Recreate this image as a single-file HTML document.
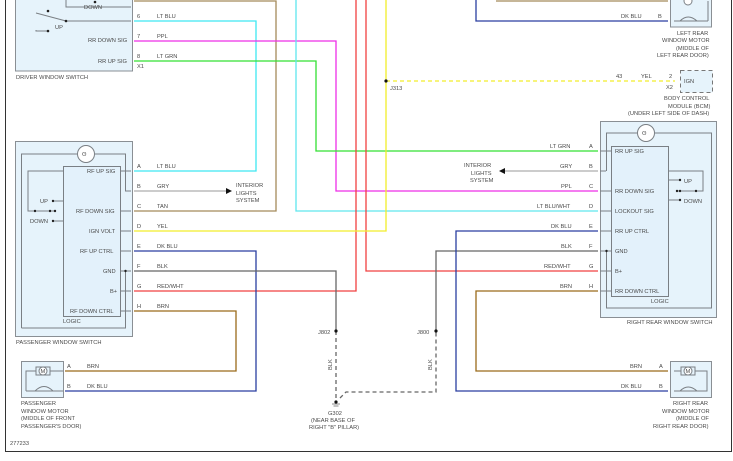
<!DOCTYPE html>
<html><head><meta charset="utf-8"><style>
html,body{margin:0;padding:0;background:#fff;}
svg{display:block;}
text{font-family:"Liberation Sans",sans-serif;font-size:5.7px;fill:#4a4a4a;}
.bx{fill:#e6f3fb;stroke:#8a8f94;stroke-width:1;}
.g{fill:none;stroke:#7a7f84;stroke-width:1;}
.w{fill:none;stroke-width:1.3;}
</style></head><body>
<svg width="733" height="461" viewBox="0 0 733 461" xmlns="http://www.w3.org/2000/svg">
<rect width="733" height="461" fill="#fff"/>
<path d="M5.5 0 V451.5 H731.5 V0" fill="none" stroke="#333" stroke-width="1"/>

<rect class="bx" x="15.5" y="-2" width="117" height="73"/>
<path class="g" d="M66 0 V7 H131 M36 13 L66 21 H131 M36 30 V31 H48"/>
<circle cx="95" cy="2" r="1.3" fill="#222"/><circle cx="48" cy="11" r="1.3" fill="#222"/><circle cx="66" cy="21" r="1.3" fill="#222"/><circle cx="48" cy="31" r="1.3" fill="#222"/>
<text x="84" y="9">DOWN</text><text x="55" y="29">UP</text>
<text x="88" y="42">RR DOWN SIG</text><text x="98" y="63">RR UP SIG</text>
<text x="16" y="79">DRIVER WINDOW SWITCH</text>
<text x="137" y="18">6</text><text x="157" y="18">LT BLU</text>
<text x="137" y="38">7</text><text x="157" y="38">PPL</text>
<text x="137" y="58">8</text><text x="157" y="58">LT GRN</text>
<text x="137" y="68">X1</text>

<path class="w" stroke="#a58a5a" d="M134 1 H276 V211 H134"/>
<path class="w" stroke="#3ee8f2" d="M134 21 H256 V171 H134"/>
<path class="w" stroke="#ee2ee8" d="M134 41 H336 V191 H598"/>
<path class="w" stroke="#33e033" d="M134 61 H316 V151 H598"/>
<path class="w" stroke="#5fe6ee" d="M296 0 V211 H598"/>
<path class="w" stroke="#f04040" d="M356 0 V291 H134"/>
<path class="w" stroke="#f04040" d="M366 0 V271 H598"/>
<path class="w" stroke="#f2ee2a" d="M386 0 V231 H134"/>
<path class="w" stroke="#f2ee2a" stroke-dasharray="4,3" d="M386 81 H675"/>
<circle cx="386" cy="81" r="1.6" fill="#111"/>
<text x="390" y="90">J313</text>
<path class="w" stroke="#2a3fa0" d="M134 251 H256 V391 H65"/>
<path class="w" stroke="#9a6a1a" d="M134 311 H236 V371 H65"/>
<path class="w" stroke="#666" d="M134 271 H336 V331"/>
<path class="w" stroke="#666" stroke-dasharray="4,3" d="M336 331 V399 M340 398 L346 392 H436 V331"/>
<path class="w" stroke="#666" d="M436 331 V251 H598"/>
<circle cx="336" cy="331" r="1.6" fill="#111"/><circle cx="436" cy="331" r="1.6" fill="#111"/>
<circle cx="336" cy="402" r="1.6" fill="#111"/>
<path d="M332 404 H340 M333.5 406 H338.5" stroke="#666" stroke-width="0.7"/>
<text x="318" y="334">J802</text><text x="417" y="334">J800</text>
<text x="0" y="0" transform="translate(332,370) rotate(-90)">BLK</text>
<text x="0" y="0" transform="translate(432,370) rotate(-90)">BLK</text>
<text x="328" y="415">G302</text><text x="311" y="422">(NEAR BASE OF</text><text x="309" y="429">RIGHT "B" PILLAR)</text>
<path class="w" stroke="#2a3fa0" d="M598 231 H456 V391 H668"/>
<path class="w" stroke="#9a6a1a" d="M598 291 H476 V371 H668"/>
<path class="w" stroke="#2a3fa0" d="M476 0 V21 H668"/>
<path class="w" stroke="#a58a5a" d="M496 1 H668"/>

<rect class="bx" x="15.5" y="141.5" width="117" height="195"/>
<path class="g" d="M21.5 328 V154 H77 M95 154 H125.5 V191 H131 M21.5 328 H125.5 V271"/>
<circle cx="86" cy="154" r="8.5" fill="#fff" stroke="#7a7f84"/>
<text x="82" y="156">ʘ</text>
<rect x="63.5" y="166.5" width="57" height="150" fill="#e3f1fb" stroke="#7a7f84"/>
<path class="g" d="M63 171 H28 V211 H55 M53 201 H63 M53 221 H63 M120 171 H131 M120 211 H131 M120 231 H131 M120 251 H131 M120 271 H131 M120 291 H131 M120 311 H131"/>
<circle cx="53" cy="201" r="1.2" fill="#222"/><circle cx="53" cy="221" r="1.2" fill="#222"/><circle cx="35" cy="211" r="1.2" fill="#222"/><circle cx="50" cy="211" r="1.2" fill="#222"/><circle cx="55" cy="211" r="1.2" fill="#222"/><circle cx="125.5" cy="271" r="1.2" fill="#222"/>
<text x="40" y="203">UP</text><text x="30" y="223">DOWN</text>
<text x="87" y="173">RF UP SIG</text><text x="76" y="213">RF DOWN SIG</text><text x="89" y="233">IGN VOLT</text>
<text x="80" y="253">RF UP CTRL</text><text x="103" y="273">GND</text><text x="110" y="293">B+</text>
<text x="70" y="313">RF DOWN CTRL</text><text x="63" y="323">LOGIC</text>
<text x="16" y="344">PASSENGER WINDOW SWITCH</text>
<text x="137" y="168">A</text><text x="157" y="168">LT BLU</text>
<text x="137" y="188">B</text><text x="157" y="188">GRY</text>
<text x="137" y="208">C</text><text x="157" y="208">TAN</text>
<text x="137" y="228">D</text><text x="157" y="228">YEL</text>
<text x="137" y="248">E</text><text x="157" y="248">DK BLU</text>
<text x="137" y="268">F</text><text x="157" y="268">BLK</text>
<text x="137" y="288">G</text><text x="157" y="288">RED/WHT</text>
<text x="137" y="308">H</text><text x="157" y="308">BRN</text>
<path d="M134 191 H226" stroke="#999" stroke-width="1"/><path d="M226 188 L232 191 L226 194Z" fill="#111"/>
<text x="236" y="187">INTERIOR</text><text x="236" y="195">LIGHTS</text><text x="236" y="202">SYSTEM</text>

<rect class="bx" x="21.5" y="361.5" width="42" height="36"/>
<path class="g" d="M26 391 V371 H36 M50 371 H63 M26 391 H63 M35 391 Q44 382 53 391"/>
<rect x="36" y="367" width="14" height="8" fill="#e6f3fb" stroke="#7a7f84"/><circle cx="43" cy="371" r="4" fill="#fff" stroke="#7a7f84"/><text x="40.5" y="373">M</text>
<text x="67" y="368">A</text><text x="87" y="368">BRN</text>
<text x="67" y="388">B</text><text x="87" y="388">DK BLU</text>
<text x="21" y="405">PASSENGER</text><text x="21" y="413">WINDOW MOTOR</text><text x="21" y="420">(MIDDLE OF FRONT</text><text x="21" y="428">PASSENGER'S DOOR)</text>
<text x="10" y="445">277233</text>

<rect class="bx" x="670.5" y="-3" width="41" height="30"/>
<path class="g" d="M674 21 H708 M680 21 Q688 13 697 21 M708 21 V1"/>
<circle cx="688" cy="1" r="4" fill="#fff" stroke="#7a7f84"/>
<text x="621" y="18">DK BLU</text><text x="658" y="18">B</text>
<text x="677" y="35">LEFT REAR</text><text x="662" y="42">WINDOW MOTOR</text><text x="676" y="50">(MIDDLE OF</text><text x="657" y="57">LEFT REAR DOOR)</text>

<rect x="680.5" y="70.5" width="32" height="22" fill="#e6f3fb" stroke="#777" stroke-dasharray="4,3"/>
<text x="684" y="83">IGN</text>
<text x="616" y="78">43</text><text x="641" y="78">YEL</text><text x="669" y="78">2</text><text x="666" y="89">X2</text>
<text x="664" y="100">BODY CONTROL</text><text x="668" y="108">MODULE (BCM)</text><text x="628" y="115">(UNDER LEFT SIDE OF DASH)</text>

<rect class="bx" x="600.5" y="121.5" width="116" height="196"/>
<path class="g" d="M606.5 171 V133 H637 M655 133 H711.5 V308 H606.5 V251"/>
<circle cx="646" cy="133" r="8.5" fill="#fff" stroke="#7a7f84"/><text x="642" y="135">ʘ</text>
<rect x="611.5" y="146.5" width="57" height="150" fill="#e3f1fb" stroke="#7a7f84"/>
<path class="g" d="M600 151 H611 M600 171 H606 M600 191 H611 M600 211 H611 M600 231 H611 M600 251 H611 M600 271 H611 M600 291 H611 M668 171 H703 V191 H677 M668 180 H680 M668 200 H680"/>
<circle cx="680" cy="180" r="1.2" fill="#222"/><circle cx="680" cy="200" r="1.2" fill="#222"/><circle cx="677" cy="191" r="1.2" fill="#222"/><circle cx="680" cy="191" r="1.2" fill="#222"/><circle cx="696" cy="191" r="1.2" fill="#222"/><circle cx="606.5" cy="251" r="1.2" fill="#222"/>
<text x="684" y="183">UP</text><text x="684" y="203">DOWN</text>
<text x="615" y="153">RR UP SIG</text><text x="615" y="193">RR DOWN SIG</text><text x="615" y="213">LOCKOUT SIG</text>
<text x="615" y="233">RR UP CTRL</text><text x="615" y="253">GND</text><text x="615" y="273">B+</text><text x="615" y="293">RR DOWN CTRL</text>
<text x="651" y="303">LOGIC</text><text x="627" y="324">RIGHT REAR WINDOW SWITCH</text>
<text x="550" y="148">LT GRN</text><text x="589" y="148">A</text>
<text x="560" y="168">GRY</text><text x="589" y="168">B</text>
<text x="561" y="188">PPL</text><text x="589" y="188">C</text>
<text x="537" y="208">LT BLU/WHT</text><text x="589" y="208">D</text>
<text x="551" y="228">DK BLU</text><text x="589" y="228">E</text>
<text x="561" y="248">BLK</text><text x="589" y="248">F</text>
<text x="544" y="268">RED/WHT</text><text x="589" y="268">G</text>
<text x="560" y="288">BRN</text><text x="589" y="288">H</text>
<path d="M505 171 H598" stroke="#999" stroke-width="1"/><path d="M505 168 L499 171 L505 174Z" fill="#111"/>
<text x="464" y="167">INTERIOR</text><text x="471" y="175">LIGHTS</text><text x="470" y="182">SYSTEM</text>

<rect class="bx" x="670.5" y="361.5" width="41" height="36"/>
<path class="g" d="M674 371 H681 M695 371 H707 V391 H674 M680 391 Q688 383 697 391"/>
<rect x="681" y="367" width="14" height="8" fill="#e6f3fb" stroke="#7a7f84"/><circle cx="688" cy="371" r="4" fill="#fff" stroke="#7a7f84"/><text x="685.5" y="373">M</text>
<text x="630" y="368">BRN</text><text x="659" y="368">A</text>
<text x="621" y="388">DK BLU</text><text x="659" y="388">B</text>
<text x="673" y="405">RIGHT REAR</text><text x="662" y="413">WINDOW MOTOR</text><text x="676" y="420">(MIDDLE OF</text><text x="653" y="428">RIGHT REAR DOOR)</text>
</svg>
</body></html>
